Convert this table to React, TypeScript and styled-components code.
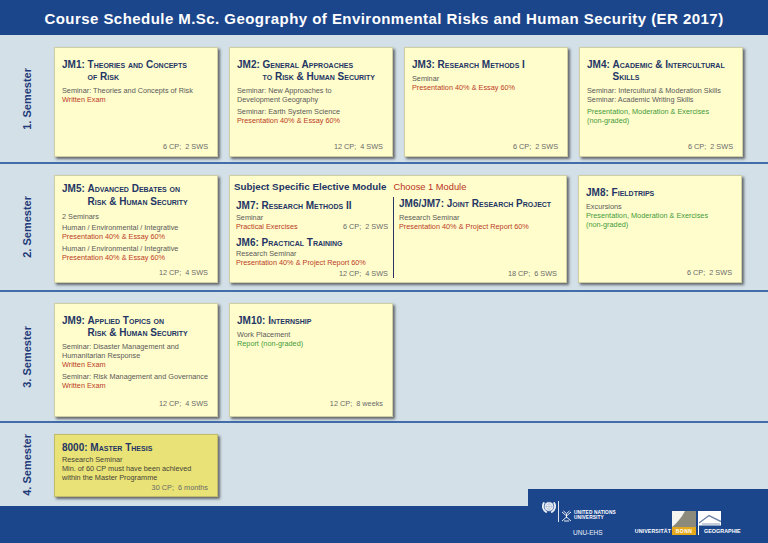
import React from 'react';
import styled, { createGlobalStyle } from 'styled-components';

const Global = createGlobalStyle`
  html, body { margin: 0; padding: 0; }
  body {
    width: 768px; height: 543px; overflow: hidden;
    background: #d3e0e8;
    font-family: "Liberation Sans", Arial, Helvetica, sans-serif;
  }
`;

const NAVY = '#1c468c';
const INK = '#243565';

const Page = styled.div`
  width: 768px;
  height: 543px;
  display: flex;
  flex-direction: column;
  background: #d3e0e8;
`;

const Header = styled.header`
  height: 35px;
  flex-shrink: 0;
  background: ${NAVY};
  display: flex;
  align-items: center;
  justify-content: center;
`;

const Title = styled.h1`
  margin: 0;
  padding-top: 2px;
  color: #fff;
  font-size: 15px;
  font-weight: 700;
  letter-spacing: 0.45px;
  line-height: 1;
`;

const Row = styled.section<{ $h: number; $last?: boolean }>`
  height: ${(p) => p.$h}px;
  flex-shrink: 0;
  box-sizing: border-box;
  display: flex;
  border-bottom: ${(p) => (p.$last ? 'none' : '2px solid #426daa')};
`;

const SemLabel = styled.div`
  width: 54px;
  flex-shrink: 0;
  display: flex;
  align-items: center;
  justify-content: center;
`;

const SemText = styled.span`
  writing-mode: vertical-rl;
  transform: rotate(180deg);
  font-size: 11px;
  font-weight: 700;
  color: #1f3a78;
  white-space: nowrap;
`;

const Cards = styled.div<{ $pt: number }>`
  display: flex;
  align-items: flex-start;
  gap: 11px;
  padding-top: ${(p) => p.$pt}px;
`;

const Card = styled.article<{ $w?: number; $h: number; $pt: number; $pb: number; $pl?: number; $thesis?: boolean }>`
  width: ${(p) => p.$w ?? 164}px;
  height: ${(p) => p.$h}px;
  box-sizing: border-box;
  flex-shrink: 0;
  background: ${(p) => (p.$thesis ? '#e9e276' : '#fffdcc')};
  border: 1px solid rgba(120, 118, 90, 0.35);
  box-shadow: 2px 2px 2.5px rgba(40, 40, 40, 0.65);
  padding: ${(p) => p.$pt}px 9px ${(p) => p.$pb}px ${(p) => p.$pl ?? 7}px;
  display: flex;
  flex-direction: column;
`;

const ModTitle = styled.h3`
  margin: 0;
  display: flex;
  font-size: 10px;
  font-weight: 700;
  font-variant: small-caps;
  line-height: 12.5px;
  color: ${INK};
`;

const Code = styled.span`
  white-space: pre;
  flex-shrink: 0;
`;

const Name = styled.span`
  white-space: nowrap;
`;

const Info = styled.div<{ $mt: number }>`
  display: flex;
  flex-direction: column;
  gap: 2.5px;
  margin-top: ${(p) => p.$mt}px;
`;

const Group = styled.div`
  display: flex;
  flex-direction: column;
`;

type Tone = 'gray' | 'red' | 'green' | 'dark';
const toneColor: Record<Tone, string> = {
  gray: '#5a5a5a',
  red: '#bb3b25',
  green: '#3f9a3a',
  dark: '#45443a',
};

const Line = styled.p<{ $tone: Tone }>`
  margin: 0;
  font-size: 7.3px;
  line-height: 9px;
  color: ${(p) => toneColor[p.$tone]};
  white-space: nowrap;
`;

const Credits = styled.div`
  margin-top: auto;
  text-align: right;
  font-size: 7.3px;
  line-height: 9px;
  color: #6a6a6a;
  white-space: pre;
`;

const InlineRow = styled.div`
  display: flex;
  justify-content: space-between;
  align-items: baseline;
`;

/* Elective module */
const ElectiveHead = styled.div`
  display: flex;
  align-items: baseline;
  gap: 7px;
  line-height: 12px;
`;

const ElectiveTitle = styled.span`
  font-size: 9.8px;
  font-weight: 700;
  color: ${INK};
  white-space: nowrap;
`;

const Choose = styled.span`
  font-size: 9.3px;
  color: #b8321f;
  white-space: nowrap;
`;

const Columns = styled.div`
  flex: 1;
  margin-top: 4px;
  margin-left: 2px;
  display: grid;
  grid-template-columns: 152px 1px 1fr;
  column-gap: 5px;
`;

const SubCol = styled.div<{ $pt: number }>`
  display: flex;
  flex-direction: column;
  padding-top: ${(p) => p.$pt}px;
`;

const Divider = styled.div`
  background: #2a3566;
`;

const Spacer = styled.div<{ $h: number }>`
  height: ${(p) => p.$h}px;
  flex-shrink: 0;
`;

/* Footer */
const Footer = styled.footer`
  height: 37px;
  flex-shrink: 0;
  background: ${NAVY};
  display: flex;
  justify-content: flex-end;
  align-items: flex-end;
`;

const LogoTab = styled.div`
  width: 240px;
  height: 54px;
  flex-shrink: 0;
  box-sizing: border-box;
  background: ${NAVY};
  display: flex;
  align-items: flex-start;
  gap: 19px;
  padding: 11px 0 0 14px;
`;

const UnuGroup = styled.div`
  display: flex;
  flex-direction: column;
`;

const UnuTop = styled.div`
  display: flex;
  gap: 2px;
  height: 22px;
`;

const UnuRule = styled.div`
  width: 1px;
  height: 21px;
  margin-top: 1px;
  background: rgba(255, 255, 255, 0.85);
`;

const UnuWords = styled.div`
  align-self: flex-end;
  margin-bottom: 2px;
  display: flex;
  flex-direction: column;
  font-size: 4.8px;
  line-height: 5px;
  font-weight: 700;
  color: #fff;
  letter-spacing: 0.1px;
  white-space: nowrap;
`;

const UnuEhs = styled.div`
  margin: 6.5px 0 0 31px;
  font-size: 6.5px;
  line-height: 7px;
  color: #e8eef8;
  white-space: nowrap;
`;

const BonnGroup = styled.div`
  align-self: flex-end;
  margin-bottom: 8px;
  display: flex;
  align-items: flex-end;
`;

const UniWord = styled.span`
  font-size: 5.2px;
  font-weight: 700;
  line-height: 8px;
  color: #fff;
  letter-spacing: 0.15px;
  margin-right: 1px;
  white-space: nowrap;
`;

const BonnMark = styled.div`
  display: flex;
  flex-direction: column;
  width: 24px;
`;

const BonnBox = styled.span`
  height: 8px;
  background: #e6a91c;
  color: #fff;
  font-size: 5px;
  font-weight: 700;
  line-height: 8px;
  text-align: center;
  letter-spacing: 0.5px;
`;

const GeoMark = styled.div`
  margin-left: 2px;
  display: flex;
  flex-direction: column;
  align-items: flex-start;
  border-left: 1px solid #fff;
`;

const GeoWord = styled.span`
  margin-left: 5px;
  font-size: 5.4px;
  font-weight: 700;
  line-height: 7px;
  color: #fff;
  white-space: nowrap;
`;

type Mod = {
  code: string;
  name: string[];
  groups: [Tone, string][][];
  credits: string;
  pt?: number;
  pb?: number;
  mt?: number;
};

const ModuleCard: React.FC<{ m: Mod; h: number; thesis?: boolean }> = ({ m, h, thesis }) => (
  <Card $h={h} $pt={m.pt ?? 10.5} $pb={m.pb ?? 5} $thesis={thesis}>
    <ModTitle>
      <Code>{m.code} </Code>
      <Name>
        {m.name.map((n, i) => (
          <React.Fragment key={i}>
            {i > 0 && <br />}
            {n}
          </React.Fragment>
        ))}
      </Name>
    </ModTitle>
    <Info $mt={m.mt ?? 2.5}>
      {m.groups.map((g, gi) => (
        <Group key={gi}>
          {g.map(([tone, text], li) => (
            <Line key={li} $tone={tone}>
              {text}
            </Line>
          ))}
        </Group>
      ))}
    </Info>
    <Credits>{m.credits}</Credits>
  </Card>
);

const jm1: Mod = {
  code: 'JM1:',
  name: ['Theories and Concepts', 'of Risk'],
  groups: [[['gray', 'Seminar: Theories and Concepts of Risk'], ['red', 'Written Exam']]],
  credits: '6 CP;  2 SWS',
};
const jm2: Mod = {
  code: 'JM2:',
  name: ['General Approaches', 'to Risk & Human Security'],
  groups: [
    [['gray', 'Seminar: New Approaches to'], ['gray', 'Development Geography']],
    [['gray', 'Seminar: Earth System Science'], ['red', 'Presentation 40% & Essay 60%']],
  ],
  credits: '12 CP;  4 SWS',
};
const jm3: Mod = {
  code: 'JM3:',
  name: ['Research Methods I'],
  groups: [[['gray', 'Seminar'], ['red', 'Presentation 40% & Essay 60%']]],
  credits: '6 CP;  2 SWS',
};
const jm4: Mod = {
  code: 'JM4:',
  name: ['Academic & Intercultural', 'Skills'],
  groups: [
    [['gray', 'Seminar: Intercultural & Moderation Skills'], ['gray', 'Seminar: Academic Writing Skills']],
    [['green', 'Presentation, Moderation & Exercises'], ['green', '(non-graded)']],
  ],
  credits: '6 CP;  2 SWS',
};
const jm5: Mod = {
  code: 'JM5:',
  name: ['Advanced Debates on', 'Risk & Human Security'],
  groups: [
    [['gray', '2 Seminars']],
    [['gray', 'Human / Environmental / Integrative'], ['red', 'Presentation 40% & Essay 60%']],
    [['gray', 'Human / Environmental / Integrative'], ['red', 'Presentation 40% & Essay 60%']],
  ],
  credits: '12 CP;  4 SWS',
  pt: 7,
  mt: 3.5,
};
const jm8: Mod = {
  code: 'JM8:',
  name: ['Fieldtrips'],
  groups: [
    [['gray', 'Excursions'], ['green', 'Presentation, Moderation & Exercises'], ['green', '(non-graded)']],
  ],
  credits: '6 CP;  2 SWS',
};
const jm9: Mod = {
  code: 'JM9:',
  name: ['Applied Topics on', 'Risk & Human Security'],
  groups: [
    [['gray', 'Seminar: Disaster Management and'], ['gray', 'Humanitarian Response'], ['red', 'Written Exam']],
    [['gray', 'Seminar: Risk Management and Governance'], ['red', 'Written Exam']],
  ],
  credits: '12 CP;  4 SWS',
  pb: 8.5,
};
const jm10: Mod = {
  code: 'JM10:',
  name: ['Internship'],
  groups: [[['gray', 'Work Placement'], ['green', 'Report (non-graded)']]],
  credits: '12 CP;  8 weeks',
  pb: 8.5,
};
const thesis: Mod = {
  code: '8000:',
  name: ['Master Thesis'],
  groups: [
    [
      ['dark', 'Research Seminar'],
      ['dark', 'Min. of 60 CP must have been achieved'],
      ['dark', 'within the Master Programme'],
    ],
  ],
  credits: '30 CP;  6 months',
  pt: 7,
  pb: 4,
  mt: 0,
};

const ElectiveCard: React.FC = () => (
  <Card $w={338} $h={108} $pt={5} $pb={4} $pl={4}>
    <ElectiveHead>
      <ElectiveTitle>Subject Specific Elective Module</ElectiveTitle>
      <Choose>Choose 1 Module</Choose>
    </ElectiveHead>
    <Columns>
      <SubCol $pt={3}>
        <ModTitle>
          <Code>JM7: </Code>
          <Name>Research Methods II</Name>
        </ModTitle>
        <Line $tone="gray">Seminar</Line>
        <InlineRow>
          <Line $tone="red">Practical Exercises</Line>
          <Credits>6 CP;  2 SWS</Credits>
        </InlineRow>
        <Spacer $h={6} />
        <ModTitle>
          <Code>JM6: </Code>
          <Name>Practical Training</Name>
        </ModTitle>
        <Line $tone="gray">Research Seminar</Line>
        <Line $tone="red">Presentation 40% &amp; Project Report 60%</Line>
        <Credits>12 CP;  4 SWS</Credits>
      </SubCol>
      <Divider />
      <SubCol $pt={1}>
        <ModTitle>
          <Code>JM6/JM7: </Code>
          <Name>Joint Research Project</Name>
        </ModTitle>
        <Spacer $h={2} />
        <Line $tone="gray">Research Seminar</Line>
        <Line $tone="red">Presentation 40% &amp; Project Report 60%</Line>
        <Credits>18 CP;  6 SWS</Credits>
      </SubCol>
    </Columns>
  </Card>
);

const UnEmblem = () => (
  <svg width="14" height="14" viewBox="0 0 14 14" aria-hidden="true">
    <circle cx="7" cy="6.6" r="4.6" fill="#eef1f7" />
    <circle cx="7" cy="6.6" r="4.6" fill="none" stroke="#7f95bd" strokeWidth="0.4" />
    <circle cx="7" cy="6.6" r="2.7" fill="none" stroke="#7f95bd" strokeWidth="0.35" />
    <path d="M7 2 V11.2 M2.4 6.6 H11.6" stroke="#7f95bd" strokeWidth="0.35" />
    <path
      d="M1.8 3 C0.2 5.6 0.6 9.8 4.2 12 M12.2 3 C13.8 5.6 13.4 9.8 9.8 12"
      fill="none"
      stroke="#eef1f7"
      strokeWidth="1.8"
      strokeLinecap="round"
    />
  </svg>
);

const UnuSymbol = () => (
  <svg width="11" height="12" viewBox="0 0 11 12" aria-hidden="true" style={{ alignSelf: 'flex-end' }}>
    <path
      d="M1 2 L5.5 6 L10 2 M2.5 1 L5.5 3.6 L8.5 1 M1 11 L5.5 7 L10 11 M3 11 H8 M5.5 4 V8"
      fill="none"
      stroke="#fff"
      strokeWidth="0.9"
    />
  </svg>
);

const BonnLogo = () => (
  <svg width="24" height="16" viewBox="0 0 24 16" aria-hidden="true">
    <rect width="24" height="16" fill="#8c8a7b" />
    <path d="M0 0 H13 C10 6 5 12 0 16 Z" fill="#f4f4f0" />
  </svg>
);

const GeoLogo = () => (
  <svg width="22" height="17" viewBox="0 0 22 17" aria-hidden="true">
    <rect width="22" height="17" fill="#fff" />
    <path d="M0 12 L10 4.5 L22 10.5" fill="none" stroke="#6e83a6" strokeWidth="1.4" />
    <path d="M3 13 H21" stroke="#6e83a6" strokeWidth="0.8" />
    <rect x="0" y="14.5" width="22" height="2.5" fill="#1c468c" />
  </svg>
);

export default function App() {
  return (
    <>
      <Global />
      <Page>
        <Header>
          <Title>Course Schedule M.Sc. Geography of Environmental Risks and Human Security (ER 2017)</Title>
        </Header>

        <Row $h={129}>
          <SemLabel>
            <SemText>1. Semester</SemText>
          </SemLabel>
          <Cards $pt={12}>
            <ModuleCard m={jm1} h={110} />
            <ModuleCard m={jm2} h={110} />
            <ModuleCard m={jm3} h={110} />
            <ModuleCard m={jm4} h={110} />
          </Cards>
        </Row>

        <Row $h={128}>
          <SemLabel>
            <SemText>2. Semester</SemText>
          </SemLabel>
          <Cards $pt={11}>
            <ModuleCard m={jm5} h={108} />
            <ElectiveCard />
            <ModuleCard m={jm8} h={108} />
          </Cards>
        </Row>

        <Row $h={131}>
          <SemLabel>
            <SemText>3. Semester</SemText>
          </SemLabel>
          <Cards $pt={11}>
            <ModuleCard m={jm9} h={114} />
            <ModuleCard m={jm10} h={114} />
          </Cards>
        </Row>

        <Row $h={83} $last>
          <SemLabel>
            <SemText>4. Semester</SemText>
          </SemLabel>
          <Cards $pt={11}>
            <ModuleCard m={thesis} h={63} thesis />
          </Cards>
        </Row>

        <Footer>
          <LogoTab>
            <UnuGroup>
              <UnuTop>
                <UnEmblem />
                <UnuRule />
                <UnuSymbol />
                <UnuWords>
                  <span>UNITED NATIONS</span>
                  <span>UNIVERSITY</span>
                </UnuWords>
              </UnuTop>
              <UnuEhs>UNU-EHS</UnuEhs>
            </UnuGroup>
            <BonnGroup>
              <UniWord>UNIVERSITÄT</UniWord>
              <BonnMark>
                <BonnLogo />
                <BonnBox>BONN</BonnBox>
              </BonnMark>
              <GeoMark>
                <GeoLogo />
                <GeoWord>GEOGRAPHIE</GeoWord>
              </GeoMark>
            </BonnGroup>
          </LogoTab>
        </Footer>
      </Page>
    </>
  );
}
